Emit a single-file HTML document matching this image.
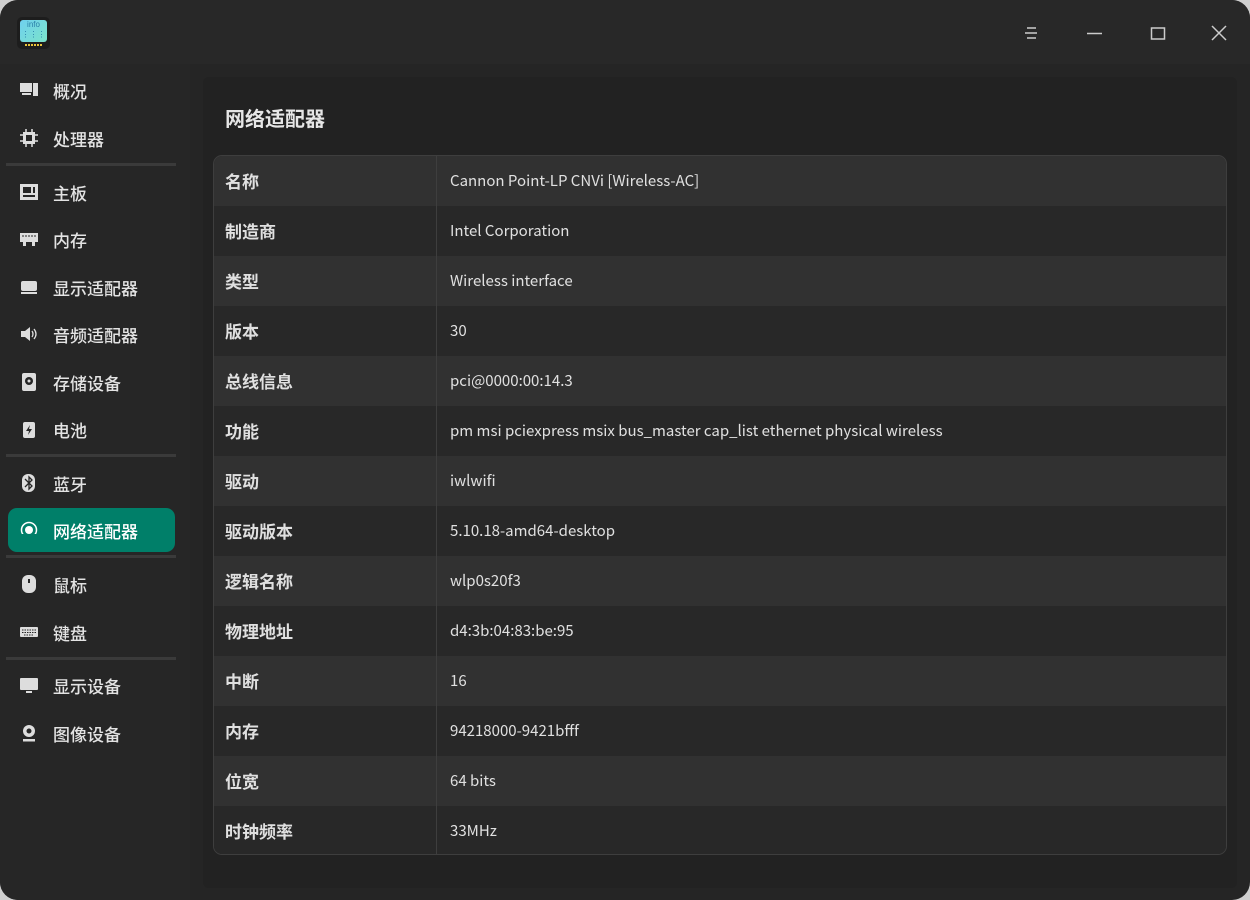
<!DOCTYPE html>
<html><head><meta charset="utf-8"><style>
*{margin:0;padding:0;box-sizing:border-box}
body{width:1250px;height:900px;background:#cfcfcf;font-family:"Liberation Sans","Noto Sans CJK SC",sans-serif;overflow:hidden;position:relative}
.win{position:absolute;left:0;top:0;width:1250px;height:900px;background:#252525;border-radius:18px;overflow:hidden}
.tb{position:absolute;left:0;top:0;width:1250px;height:64px;background:#282828}
.logo{position:absolute;left:17px;top:17px;width:33px;height:32px;border-radius:5px;background:#1d1d1d}
.logo i{position:absolute;left:3px;top:3px;width:27px;height:22px;border-radius:3px;background:linear-gradient(135deg,#6fd0ef,#7be3c9);font-style:normal;font-size:8px;color:#2a7fa8;text-align:center;line-height:10px}
.logo b{position:absolute;left:8px;top:27px;width:17px;height:2px;background:repeating-linear-gradient(90deg,#e8c33a 0 2px,transparent 2px 3px)}
.side{position:absolute;left:0;top:64px;width:190px;height:836px;background:#262626}
.it{position:absolute;left:0;width:190px;height:40px;color:#e3e3e3;font-size:17px;line-height:42px;padding-left:53px;font-family:"Noto Sans CJK SC",sans-serif;font-weight:500}
.it svg{position:absolute;left:20px;top:11px}
.sel{left:8px;width:167px;height:44px;background:#007f69;border-radius:9px;padding-left:45px;line-height:45px;color:#fff}
.sel svg{left:12px;top:13px}
.sep{position:absolute;left:6px;width:170px;height:3px;background:#3a3a3a}
.main{position:absolute;left:203px;top:77px;width:1034px;height:811px;background:#222;border-radius:6px}
h1{position:absolute;left:225px;top:103px;font-size:20px;color:#e6e6e6;font-weight:bold;font-family:"Noto Sans CJK SC",sans-serif;line-height:30px}
.tbl{position:absolute;left:213px;top:155px;width:1014px;height:700px;border:1px solid #3e3e3e;border-radius:9px;overflow:hidden}
.r{height:50px;display:flex;font-size:15.5px;color:#e0e0e0;line-height:50px;font-family:"Noto Sans CJK SC",sans-serif}
.r:nth-child(odd){background:#313131}
.r:nth-child(even){background:#282828}
.k{width:223px;padding-left:11px;font-weight:bold;border-right:1px solid #3e3e3e;font-size:17px}
.v{padding-left:13px;font-size:15px}
</style></head><body><div class="win">
<div class="tb">
<div class="logo"><i>info<br>⋮⋮⋮</i><b></b></div>
<svg style="position:absolute;left:1024px;top:26px" width="16" height="14"><path d="M3 2h9M1 7h12M3 12h9" stroke="#ccc" stroke-width="1.5"/></svg>
<svg style="position:absolute;left:1086px;top:26px" width="18" height="14"><path d="M1 7.5h15" stroke="#ccc" stroke-width="1.5"/></svg>
<svg style="position:absolute;left:1150px;top:26px" width="16" height="16"><rect x="1.5" y="2" width="13" height="11" fill="none" stroke="#ccc" stroke-width="1.5"/></svg>
<svg style="position:absolute;left:1211px;top:25px" width="16" height="16"><path d="M1 1l14 14M15 1L1 15" stroke="#ccc" stroke-width="1.5"/></svg>
</div>
<div class="side">
<div class="it" style="top:6px"><svg width="18" height="18"><rect x="0" y="2" width="12" height="9" fill="#ddd"/><rect x="13" y="2" width="5" height="13" fill="#ddd"/><rect x="2" y="12" width="9" height="2" fill="#ddd"/></svg>概况</div>
<div class="it" style="top:54px"><svg width="18" height="18"><rect x="3" y="3" width="12" height="12" fill="#ddd"/><path d="M6 0v18M12 0v18M0 6h18M0 12h18" stroke="#ddd" stroke-width="1.5"/><rect x="6" y="6" width="6" height="6" fill="#262626"/></svg>处理器</div>
<div class="sep" style="top:99px"></div>
<div class="it" style="top:108px"><svg width="18" height="18"><rect x="0" y="1" width="18" height="16" fill="#ddd"/><rect x="3" y="4" width="8" height="6" fill="#262626"/><rect x="13" y="4" width="2" height="6" fill="#262626"/><rect x="3" y="12" width="12" height="2" fill="#262626"/></svg>主板</div>
<div class="it" style="top:155px"><svg width="18" height="18"><path d="M0 3h18v9h-3v4h-3v-4h-6v4h-3v-4h-3z" fill="#ddd"/><path d="M3 5v2M6 5v2M9 5v2M12 5v2M15 5v2" stroke="#262626"/></svg>内存</div>
<div class="it" style="top:203px"><svg width="18" height="18"><rect x="1" y="3" width="16" height="10" rx="2" fill="#ddd"/><rect x="1" y="14" width="16" height="2" fill="#ddd"/></svg>显示适配器</div>
<div class="it" style="top:250px"><svg width="18" height="18"><path d="M1 6h4l5-4v14l-5-4h-4z" fill="#ddd"/><path d="M12 6q2 3 0 6M14 4q4 5 0 10" stroke="#ddd" stroke-width="1.3" fill="none"/></svg>音频适配器</div>
<div class="it" style="top:298px"><svg width="18" height="18"><rect x="2" y="0" width="14" height="18" rx="2" fill="#ddd"/><circle cx="9" cy="8" r="4" fill="#262626"/><circle cx="9" cy="8" r="1.5" fill="#ddd"/></svg>存储设备</div>
<div class="it" style="top:345px"><svg width="18" height="18"><rect x="3" y="2" width="12" height="16" rx="2" fill="#ddd"/><path d="M10 5l-4 6h3l-1 4 4-6h-3z" fill="#262626"/></svg>电池</div>
<div class="sep" style="top:390px"></div>
<div class="it" style="top:399px"><svg width="18" height="18"><rect x="2" y="0" width="13" height="18" rx="6" fill="#ddd"/><path d="M5 5l7 7-3 3V3l3 3-7 7" stroke="#262626" stroke-width="1.3" fill="none"/></svg>蓝牙</div>
<div class="it sel" style="top:444px"><svg width="18" height="18"><circle cx="9" cy="9" r="7.5" fill="none" stroke="#fff" stroke-width="1.5"/><rect x="0" y="13" width="18" height="5" fill="#007f69"/><circle cx="9" cy="9" r="4" fill="#fff"/></svg>网络适配器</div>
<div class="sep" style="top:491px"></div>
<div class="it" style="top:500px"><svg width="18" height="18"><rect x="2" y="0" width="14" height="18" rx="6" fill="#ddd"/><rect x="8" y="4" width="2" height="4" fill="#262626"/></svg>鼠标</div>
<div class="it" style="top:548px"><svg width="18" height="18"><rect x="0" y="4" width="18" height="10" rx="1" fill="#ddd"/><path d="M2 7h14M2 9.5h14M4 12h10" stroke="#262626" stroke-width="1" stroke-dasharray="1.5 1"/></svg>键盘</div>
<div class="sep" style="top:593px"></div>
<div class="it" style="top:601px"><svg width="18" height="18"><rect x="0" y="2" width="18" height="12" rx="1" fill="#ddd"/><rect x="6" y="15" width="6" height="2" fill="#ddd"/></svg>显示设备</div>
<div class="it" style="top:649px"><svg width="18" height="18"><circle cx="9" cy="7" r="6" fill="#ddd"/><circle cx="9" cy="7" r="2.5" fill="#262626"/><rect x="3" y="15" width="12" height="2.5" fill="#ddd"/></svg>图像设备</div>
</div>
<div class="main"></div>
<h1>网络适配器</h1>
<div class="tbl">
<div class="r"><div class="k">名称</div><div class="v">Cannon Point-LP CNVi [Wireless-AC]</div></div>
<div class="r"><div class="k">制造商</div><div class="v">Intel Corporation</div></div>
<div class="r"><div class="k">类型</div><div class="v">Wireless interface</div></div>
<div class="r"><div class="k">版本</div><div class="v">30</div></div>
<div class="r"><div class="k">总线信息</div><div class="v">pci@0000:00:14.3</div></div>
<div class="r"><div class="k">功能</div><div class="v">pm msi pciexpress msix bus_master cap_list ethernet physical wireless</div></div>
<div class="r"><div class="k">驱动</div><div class="v">iwlwifi</div></div>
<div class="r"><div class="k">驱动版本</div><div class="v">5.10.18-amd64-desktop</div></div>
<div class="r"><div class="k">逻辑名称</div><div class="v">wlp0s20f3</div></div>
<div class="r"><div class="k">物理地址</div><div class="v">d4:3b:04:83:be:95</div></div>
<div class="r"><div class="k">中断</div><div class="v">16</div></div>
<div class="r"><div class="k">内存</div><div class="v">94218000-9421bfff</div></div>
<div class="r"><div class="k">位宽</div><div class="v">64 bits</div></div>
<div class="r"><div class="k">时钟频率</div><div class="v">33MHz</div></div>
</div>
</div></body></html>
